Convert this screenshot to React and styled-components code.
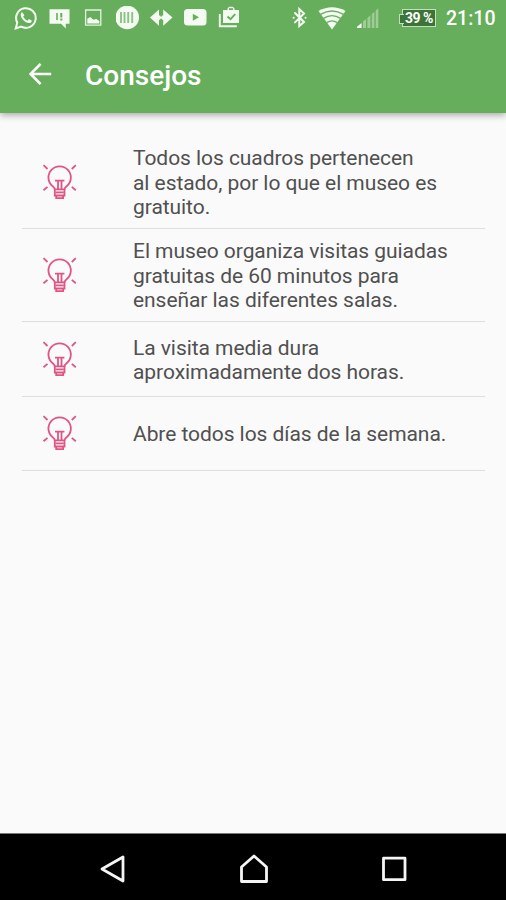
import React from 'react';
import styled, { createGlobalStyle } from 'styled-components';

const GlobalStyle = createGlobalStyle`
  * {
    box-sizing: border-box;
  }
  body {
    margin: 0;
    background: #fafafa;
    font-family: Roboto, 'Liberation Sans', sans-serif;
  }
`;

const Screen = styled.div`
  width: 506px;
  height: 900px;
  display: flex;
  flex-direction: column;
  overflow: hidden;
  background: #fafafa;
`;

const Header = styled.header`
  flex: none;
  height: 113px;
  background: #66ae5c;
  color: #fff;
  box-shadow: 0 2px 7px rgba(0, 0, 0, 0.35);
`;

const StatusBar = styled.div`
  height: 36px;
  padding: 0 11px 0 14px;
  display: flex;
  align-items: center;
  justify-content: space-between;
`;

const Notifications = styled.div`
  display: flex;
  gap: 10px;
`;

const SystemStatus = styled.div`
  display: flex;
  align-items: center;
`;

const StatusIcon = styled.svg`
  display: block;
  flex: none;
  width: ${props => props.$width || 24}px;
  height: 24px;
  margin-right: ${props => props.$gap || 0}px;
  fill: #f4fbf1;
`;

const Battery = styled.div`
  width: 34px;
  height: 18px;
  margin-right: 10px;
  display: flex;
  align-items: center;
  justify-content: center;
  position: relative;
  border: 1px solid #c4dfbf;
  background: #3c7438;
  color: #fff;
  font-size: 14px;
  font-weight: 700;
  letter-spacing: -0.5px;
  white-space: nowrap;

  &::before {
    content: '';
    position: absolute;
    left: -4px;
    top: 4px;
    width: 4px;
    height: 8px;
    border: 1px solid #c4dfbf;
    border-right: 0;
    background: #3c7438;
  }
`;

const Clock = styled.time`
  width: 49px;
  padding-top: 1px;
  font-size: 19.5px;
  font-weight: 500;
  line-height: 24px;
  white-space: nowrap;
`;

const Toolbar = styled.div`
  height: 76px;
  padding: 0 27px;
  display: flex;
  align-items: center;
`;

const BackButton = styled.button`
  width: 26px;
  height: 26px;
  margin: 0 32px 0 0;
  padding: 0;
  border: 0;
  background: none;
  cursor: pointer;

  svg {
    display: block;
  }
`;

const Title = styled.h1`
  margin: 3px 0 0;
  font-size: 28px;
  font-weight: 500;
  line-height: 32px;
`;

const TipList = styled.ul`
  flex: 1;
  margin: 0;
  padding: 23px 21px 0 22px;
  list-style: none;
`;

const Tip = styled.li`
  height: ${props => props.$height}px;
  padding-left: 20px;
  display: flex;
  align-items: center;
  border-bottom: 1px solid #dedede;
`;

const BulbIcon = styled.svg`
  flex: none;
  width: 36px;
  height: 36px;
  margin: 0 55px 1px 0;
  fill: none;
  stroke: #df5682;
  stroke-width: 1.8;
`;

const TipText = styled.p`
  margin: 2px 0 0;
  color: #505050;
  font-size: 21px;
  line-height: 24.5px;
  letter-spacing: -0.06px;
  white-space: nowrap;
`;

const NavBar = styled.nav`
  flex: none;
  height: 67px;
  padding: 4px 97px 0 99px;
  display: flex;
  align-items: center;
  justify-content: space-between;
  border-top: 1px solid #777;
  background: #000;
`;

const NavIcon = styled.svg`
  width: 30px;
  height: 30px;
  fill: none;
  stroke: #f5f5f5;
  stroke-width: 2.8;
  stroke-linejoin: round;
`;

const tips = [
  {
    height: 93,
    lines: [
      'Todos los cuadros pertenecen',
      'al estado, por lo que el museo es',
      'gratuito.'
    ]
  },
  {
    height: 93,
    lines: [
      'El museo organiza visitas guiadas',
      'gratuitas de 60 minutos para',
      'enseñar las diferentes salas.'
    ]
  },
  { height: 75, lines: ['La visita media dura', 'aproximadamente dos horas.'] },
  { height: 74, lines: ['Abre todos los días de la semana.'] }
];

const Bulb = () => (
  <BulbIcon viewBox="0 0 36 36">
    <path d="M12.8 25.4c0-1.4-.8-2.1-2.1-3.1a11.2 11.2 0 1 1 13.9 0c-1.3 1-2.1 1.7-2.1 3.1" />
    <path d="M12.8 25.4h9.7v6.1h-9.7zM14.2 31.5v2.6h6.9v-2.6" />
    <path d="M13 16.6h9.4M16 17v8.4M19.5 17v8.4M13.5 28.4h8.3" />
    <path d="M1.5 1.2l4 3.8M33.8 1.2l-4 3.8M1.5 26.3l4-3.4M33.8 26.3l-4-3.4" />
  </BulbIcon>
);

const NotificationIcons = () => (
  <Notifications>
    <StatusIcon viewBox="0 0 24 24">
      <path
        d="M1.7 22.4l1.6-5.7a9.8 9.8 0 1 1 3.9 3.9z"
        fill="none"
        stroke="#f4fbf1"
        strokeWidth="2"
      />
      <path d="M8.3 6.3c-.9.2-1.7 1.2-1.6 2.7.3 3.6 4.3 7.8 8.2 8.1 1.6.1 2.8-.9 3-2.3l-3-1.7-1.4 1.6c-1.8-.7-3.4-2.2-4.3-4.1l1.2-1.4z" />
    </StatusIcon>
    <StatusIcon viewBox="0 0 24 24">
      <path d="M1.5 3.3h20v14.5h-3.7v4.8l-4.8-4.8H1.5z" />
      <path d="M8.2 7h1.6v7H8.2zM12.3 7h2v4.6h-2zM12.3 12.6h2v1.8h-2z" fill="#66ae5c" />
    </StatusIcon>
    <StatusIcon viewBox="0 0 24 24">
      <path d="M3.6 4h15.2v15.2H3.6z" fill="none" stroke="#e4f2e0" strokeWidth="1.3" />
      <path d="M5.3 17.5v-4.8l3-1.7 3 2.7 3-.7 3 2v2.5z" />
    </StatusIcon>
    <StatusIcon viewBox="0 0 24 24">
      <circle cx="11.2" cy="11.4" r="11.8" />
      <path d="M5 6v11M8.5 6v11M12.2 6v11M16.2 6v11" stroke="#8dc285" strokeWidth="1.9" />
    </StatusIcon>
    <StatusIcon viewBox="0 0 24 24">
      <path d="M0 11.5L9 3.6v6h4.2v-6l9.3 7.9-9.3 8.2v-6H9v6z" />
      <path d="M11.1 3.5v16" stroke="#66ae5c" strokeWidth="1.7" />
      <path d="M9.5 11.6h3.5" stroke="#f4fbf1" strokeWidth="2.2" />
    </StatusIcon>
    <StatusIcon viewBox="0 0 24 24">
      <rect x="0" y="3" width="22.5" height="16.5" rx="3.5" />
      <path d="M8.8 7.7v7l6.2-3.5z" fill="#66ae5c" />
    </StatusIcon>
    <StatusIcon viewBox="0 0 24 24">
      <path d="M5 4h4.5V2.5L11 .8h4l1.5 1.7V4H21v13H5zM11 4h4V2.3h-4z" fillRule="evenodd" />
      <path d="M1.8 8v12.3h17" fill="none" stroke="#f4fbf1" strokeWidth="1.9" />
      <path d="M9.5 10.5l3 2.7 4.7-5.1" fill="none" stroke="#66ae5c" strokeWidth="1.8" />
    </StatusIcon>
  </Notifications>
);

export default function App() {
  return (
    <Screen>
      <GlobalStyle />
      <Header>
        <StatusBar>
          <NotificationIcons />
          <SystemStatus>
            <StatusIcon $width={16} $gap={10} viewBox="0 0 16 24">
              <path
                d="M3 7l9 9-4.7 4V3L12 7.4l-9 9M1.6 11.7h.1M13.5 11.7h.1"
                fill="none"
                stroke="#f4fbf1"
                strokeWidth="2"
                strokeLinecap="round"
              />
            </StatusIcon>
            <StatusIcon $width={28} $gap={11} viewBox="0 0 28 24">
              <path d="M.5 5Q14-2.5 27.5 5L14 23.6z" />
              <path
                d="M2.5 8.4Q14 1.6 25.5 8.4M5.5 12.4Q14 7 22.5 12.4M8.8 16.6Q14 13 19.2 16.6"
                fill="none"
                stroke="#66ae5c"
                strokeWidth="1.3"
              />
            </StatusIcon>
            <StatusIcon $width={22} $gap={23} viewBox="0 0 22 24">
              <path d="M0 22v-1.2L4.6 17v5z" />
              <path
                d="M6 22v-6.4l3-2.5V22zM10.4 22V12l3-2.7V22zM14.8 22V8l2.6-2.2V22zM18.7 22V4.6L21.3 2.4V22z"
                opacity="0.4"
              />
            </StatusIcon>
            <Battery>39 %</Battery>
            <Clock>21:10</Clock>
          </SystemStatus>
        </StatusBar>
        <Toolbar>
          <BackButton aria-label="Atrás">
            <svg width="26" height="26" viewBox="0 0 26 26" fill="none" stroke="#fff" strokeWidth="2.6">
              <path d="M24.2 13H4M13.6 2.8L3.6 13l10 10.2" />
            </svg>
          </BackButton>
          <Title>Consejos</Title>
        </Toolbar>
      </Header>
      <TipList>
        {tips.map(({ height, lines }) => (
          <Tip key={lines[0]} $height={height}>
            <Bulb />
            <TipText>
              {lines.map((line, i) => (
                <React.Fragment key={line}>
                  {i > 0 && <br />}
                  {line}
                </React.Fragment>
              ))}
            </TipText>
          </Tip>
        ))}
      </TipList>
      <NavBar>
        <NavIcon viewBox="0 0 30 30">
          <path d="M3 15L24 3v24z" />
        </NavIcon>
        <NavIcon viewBox="0 0 30 30">
          <path d="M2.5 27.5V13L15 2l12.5 11v14.5z" />
        </NavIcon>
        <NavIcon viewBox="0 0 30 30">
          <rect x="4.5" y="4.2" width="21.5" height="21.5" />
        </NavIcon>
      </NavBar>
    </Screen>
  );
}
